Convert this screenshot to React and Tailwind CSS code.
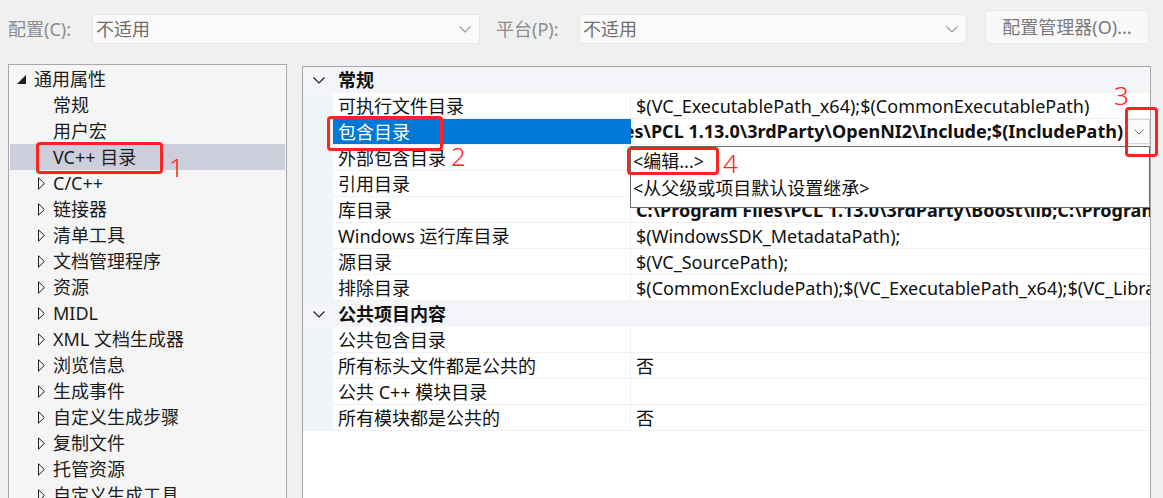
import React from "react";

// VS project property page: VC++ directories, with the "包含目录" dropdown open
const FONT = { fontFamily: '"Noto Sans", "Noto Sans CJK SC", sans-serif' };

const tree = [
  { label: "常规" },
  { label: "用户宏" },
  { label: "VC++ 目录", selected: true },
  { label: "C/C++", arrow: true },
  { label: "链接器", arrow: true },
  { label: "清单工具", arrow: true },
  { label: "文档管理程序", arrow: true },
  { label: "资源", arrow: true },
  { label: "MIDL", arrow: true },
  { label: "XML 文档生成器", arrow: true },
  { label: "浏览信息", arrow: true },
  { label: "生成事件", arrow: true },
  { label: "自定义生成步骤", arrow: true },
  { label: "复制文件", arrow: true },
  { label: "托管资源", arrow: true },
  { label: "自定义生成工具", arrow: true },
];

const general = [
  { name: "可执行文件目录", value: "$(VC_ExecutablePath_x64);$(CommonExecutablePath)" },
  { name: "包含目录", editing: true },
  { name: "外部包含目录", value: "$(VC_IncludePath);$(WindowsSDK_IncludePath);" },
  { name: "引用目录", value: "$(VC_ReferencesPath_x64);" },
  { name: "库目录", value: "C:\\Program Files\\PCL 1.13.0\\3rdParty\\Boost\\lib;C:\\Program Files\\PCL 1.13.0\\lib", bold: true },
  { name: "Windows 运行库目录", value: "$(WindowsSDK_MetadataPath);" },
  { name: "源目录", value: "$(VC_SourcePath);" },
  { name: "排除目录", value: "$(CommonExcludePath);$(VC_ExecutablePath_x64);$(VC_LibraryPath_x64)" },
];

const publicItems = [
  { name: "公共包含目录", value: "" },
  { name: "所有标头文件都是公共的", value: "否" },
  { name: "公共 C++ 模块目录", value: "" },
  { name: "所有模块都是公共的", value: "否" },
];

function Chevron({ className = "" }) {
  return (
    <svg width="12" height="7" viewBox="0 0 12 7" className={className}>
      <path d="M0.5 0.5 L6 6 L11.5 0.5" fill="none" stroke="currentColor" strokeWidth="1.2" />
    </svg>
  );
}

function Combo({ width }) {
  return (
    <div
      className="flex h-[30px] items-center justify-between rounded-[3px] border border-[#e6e6e6] bg-[#fafafa] pl-[3px] pr-[8px] text-[18px] text-[#6e6e6e]"
      style={{ width }}
    >
      <span className="leading-[28px]">不适用</span>
      <Chevron className="text-[#9a9a9a]" />
    </div>
  );
}

function TopBar() {
  return (
    <div className="flex h-[64px] shrink-0 items-start pl-[8px] text-[18px]">
      <span className="mt-[15px] w-[84px] leading-[28px] text-[#8c8c8c]">配置(C):</span>
      <div className="mt-[14px]">
        <Combo width={388} />
      </div>
      <span className="ml-[16px] mt-[15px] w-[83px] leading-[28px] text-[#8c8c8c]">平台(P):</span>
      <div className="mt-[14px]">
        <Combo width={388} />
      </div>
      <button className="ml-[18px] mt-[10px] h-[34px] w-[164px] rounded-[4px] border border-[#e8e8e8] bg-[#f9f9f9] text-[18px] text-[#7a7a7a]">
        配置管理器(O)...
      </button>
    </div>
  );
}

function Tree() {
  return (
    <div className="ml-[8px] w-[279px] shrink-0 border border-b-0 border-[#a8a8a8] bg-[#f5f5f5] pt-[1px] text-[18px] text-[#1b1b1b]">
      <div className="flex h-[26px] items-center pl-[8px] leading-[28px]">
        <svg width="9" height="9" viewBox="0 0 9 9" className="mr-[8px]">
          <path d="M9 0 L9 9 L0 9 Z" fill="#1e1e1e" />
        </svg>
        <span>通用属性</span>
      </div>
      {tree.map((t) => (
        <div
          key={t.label}
          className={`mx-[1px] flex h-[26px] items-center leading-[28px] ${t.selected ? "bg-[#cccedb]" : ""}`}
        >
          <span className="flex w-[43px] justify-end pr-[8px]">
            {t.arrow && (
              <svg width="7" height="13" viewBox="0 0 7 13">
                <path d="M0.5 0.8 L6.3 6.5 L0.5 12.2 Z" fill="none" stroke="#1e1e1e" strokeWidth="1" />
              </svg>
            )}
          </span>
          <span className="whitespace-nowrap">{t.label}</span>
        </div>
      ))}
    </div>
  );
}

function SectionRow({ title }) {
  return (
    <div className="flex h-[26px] items-center bg-[#f3f5f8] leading-[28px]">
      <span className="flex w-[30px] justify-center pl-[2px]">
        <Chevron className="text-[#1e1e1e]" />
      </span>
      <span className="pl-[5px] font-bold">{title}</span>
    </div>
  );
}

function PropRow({ row }) {
  if (row.editing) {
    return (
      <div className="flex h-[26px] border-b border-[#f0f0f0] leading-[27px]">
        <span className="w-[30px] shrink-0 bg-[#f0f4f9]" />
        <span className="w-[298px] shrink-0 bg-[#0078d7] pl-[5px] text-white">{row.name}</span>
        <span className="flex min-w-0 flex-1 items-center bg-white">
          <span className="flex min-w-0 flex-1 justify-end overflow-hidden whitespace-nowrap pr-[4px] font-bold">
            C:\Program Files\PCL 1.13.0\3rdParty\OpenNI2\Include;$(IncludePath)
          </span>
          <span className="flex h-[25px] w-[23px] shrink-0 items-center justify-center border border-[#d6d6d6] bg-[#fbfbfb]">
            <svg width="10" height="6" viewBox="0 0 10 6">
              <path d="M0.5 0.5 L5 5 L9.5 0.5" fill="none" stroke="#7a7a7a" strokeWidth="1" />
            </svg>
          </span>
        </span>
      </div>
    );
  }
  return (
    <div className="flex h-[26px] leading-[27px]">
      <span className="w-[30px] shrink-0 bg-[#f0f4f9]" />
      <span className="w-[298px] shrink-0 whitespace-nowrap border-b border-r border-[#f0f0f0] pl-[5px]">{row.name}</span>
      <span
        className={`min-w-0 flex-1 overflow-hidden whitespace-nowrap border-b border-[#f0f0f0] pl-[5px] ${row.bold ? "font-bold" : ""}`}
      >
        {row.value}
      </span>
    </div>
  );
}

function Grid() {
  return (
    <div className="relative ml-[15px] mt-[2px] w-[849px] shrink-0 border-l border-r border-t border-[#a8a8a8] bg-white text-[18px] text-[#111]">
      <SectionRow title="常规" />
      {general.map((r) => (
        <PropRow key={r.name} row={r} />
      ))}
      <SectionRow title="公共项目内容" />
      {publicItems.map((r) => (
        <PropRow key={r.name} row={r} />
      ))}

      {/* open dropdown list */}
      <div className="absolute left-[327px] top-[79px] h-[62px] w-[520px] border border-[#6a6a6a] border-r-dotted border-t-dotted bg-white pt-[1px] leading-[27px]">
        <div className="pl-[2px]">&lt;编辑...&gt;</div>
        <div className="pl-[2px]">&lt;从父级或项目默认设置继承&gt;</div>
      </div>
    </div>
  );
}

function Marks() {
  return (
    <>
      <div className="absolute left-[36px] top-[142px] h-[32px] w-[127px] rounded-[4px] border-[3px] border-[#f22]" />
      <span className="absolute left-[169px] top-[152px] text-[26px] font-light leading-[30px] text-[#f22]">1</span>
      <div className="absolute left-[327px] top-[116px] h-[35px] w-[116px] rounded-[4px] border-[3px] border-[#f22]" />
      <span className="absolute left-[451px] top-[141px] text-[26px] font-light leading-[30px] text-[#f22]">2</span>
      <span className="absolute left-[1114px] top-[80px] text-[26px] font-light leading-[30px] text-[#f22]">3</span>
      <div className="absolute left-[1125px] top-[107px] h-[50px] w-[33px] rounded-[4px] border-[3px] border-[#f22]" />
      <div className="absolute left-[627px] top-[147px] h-[28px] w-[92px] rounded-[4px] border-[3px] border-[#f22]" />
      <span className="absolute left-[723px] top-[148px] text-[26px] font-light leading-[30px] text-[#f22]">4</span>
    </>
  );
}

export default function App() {
  return (
    <div className="relative flex h-[498px] w-[1163px] flex-col overflow-hidden bg-[#f0f0f0]" style={FONT}>
      <TopBar />
      <div className="flex min-h-0 flex-1 items-stretch">
        <Tree />
        <Grid />
      </div>
      <Marks />
    </div>
  );
}
